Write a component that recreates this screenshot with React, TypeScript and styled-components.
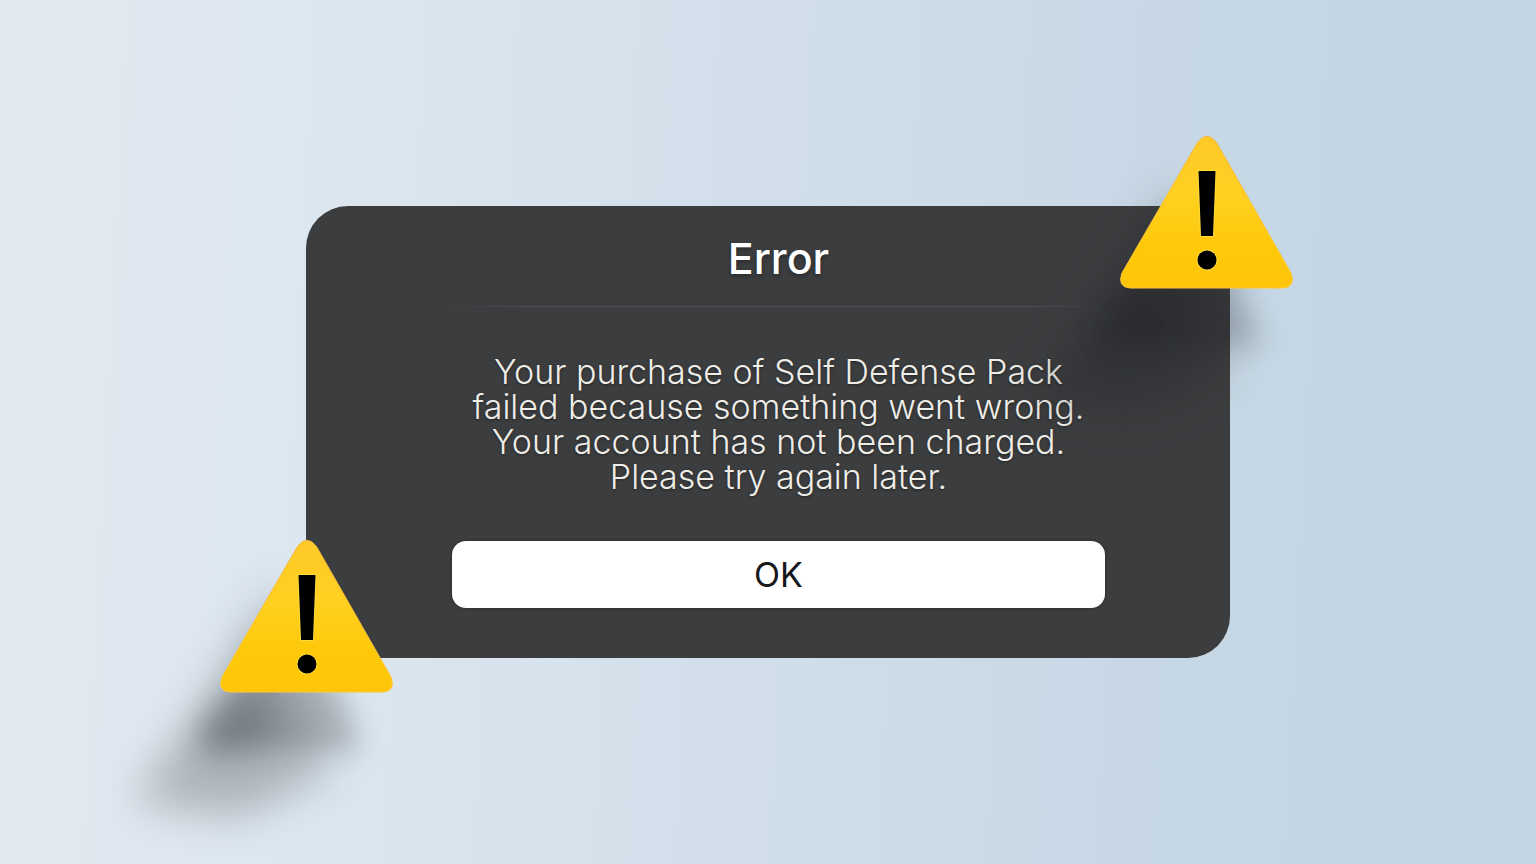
import React, { useId } from "react";
import styled, { createGlobalStyle, css } from "styled-components";

const GlobalStyle = createGlobalStyle`
  *, *::before, *::after {
    box-sizing: border-box;
  }
  body {
    margin: 0;
    font-family: Inter, "Liberation Sans", sans-serif;
  }
`;

const Page = styled.main`
  min-height: 100vh;
  display: flex;
  align-items: center;
  justify-content: center;
  padding: 40px 96px;
  overflow: hidden;
  background: linear-gradient(
    93deg,
    #e2e9f1 0%,
    #dde7ef 20%,
    #d2dfea 48%,
    #c8d8e6 72%,
    #c1d5e2 100%
  );
`;

const Dialog = styled.section`
  position: relative;
  width: 100%;
  max-width: 924px;
  padding: 0 125px 50px 146px;
  border-radius: 42px;
  background: #3c3d3f;
  text-align: center;
`;

const Header = styled.header`
  display: flex;
  align-items: center;
  justify-content: center;
  height: 100px;
  padding-top: 4px;
`;

const Title = styled.h1`
  margin: 0;
  color: #ffffff;
  font-size: 43px;
  font-weight: 500;
  line-height: 48px;
  text-shadow: 0 2px 4px rgba(0, 0, 0, 0.35);
`;

const Divider = styled.hr`
  height: 1px;
  margin: 0;
  border: 0;
  background: linear-gradient(90deg, transparent, #4e4f53 12%, #4e4f53 88%, transparent);
`;

const Message = styled.p`
  margin: 0;
  padding: 47px 0;
  color: #efede8;
  font-size: 34px;
  font-weight: 300;
  line-height: 35px;
  white-space: pre-line;
  text-shadow: 0 1px 3px rgba(0, 0, 0, 0.45);
`;

const OkButton = styled.button`
  display: block;
  width: 100%;
  height: 67px;
  padding: 0;
  border: 0;
  border-radius: 14px;
  background: #ffffff;
  box-shadow: 0 0 3px rgba(20, 20, 22, 0.6);
  color: #17181a;
  font-family: inherit;
  font-size: 34px;
  font-weight: 400;
  line-height: 40px;
  cursor: pointer;
`;

type Corner = "topRight" | "bottomLeft";

const corners = {
  topRight: css`
    top: -70px;
    right: -63px;
  `,
  bottomLeft: css`
    bottom: -34px;
    left: -86px;
  `,
};

const Sign = styled.svg<{ $corner: Corner }>`
  position: absolute;
  width: 173px;
  height: 152px;
  overflow: visible;
  pointer-events: none;
  ${({ $corner }) => corners[$corner]}
`;

function WarningSign({ corner }: { corner: Corner }) {
  const id = useId();
  const face = `${id}face`;
  const near = `${id}near`;
  const far = `${id}far`;
  const edge = `${id}edge`;
  const outline =
    "M77.500 6.500Q87 -6 96.500 6.500L171 137Q176 151 163 152H10Q-3 151 2 137Z";

  return (
    <Sign $corner={corner} viewBox="0 0 173 152" aria-hidden="true">
      <defs>
        <linearGradient id={face} x1="0" y1="0" x2="0" y2="1">
          <stop offset="0" stopColor="#ffc928" />
          <stop offset="0.4" stopColor="#ffd021" />
          <stop offset="0.72" stopColor="#ffc90a" />
          <stop offset="1" stopColor="#ffc508" />
        </linearGradient>
        <linearGradient id={edge} x1="0" y1="0" x2="0" y2="1">
          <stop offset="0" stopColor="#f1b83a" />
          <stop offset="1" stopColor="#ffc933" />
        </linearGradient>
        <filter id={near} x="-60%" y="-60%" width="220%" height="220%" colorInterpolationFilters="sRGB">
          <feGaussianBlur stdDeviation="14" />
        </filter>
        <filter id={far} x="-60%" y="-60%" width="220%" height="220%" colorInterpolationFilters="sRGB">
          <feGaussianBlur stdDeviation="22" />
        </filter>
      </defs>
      <path
        d="M60 40L-20 170L-88 262L20 276L112 230L60 140Z"
        fill="#1b1d21"
        opacity="0.26"
        filter={`url(#${far})`}
      />
      <path
        d="M64 64L-26 212L60 206L142 212L124 160Z"
        fill="#1b1d21"
        opacity="0.25"
        filter={`url(#${near})`}
      />
      <ellipse cx="12" cy="188" rx="36" ry="28" fill="#1b1d21" opacity="0.13" filter={`url(#${near})`} />
      <path d={outline} fill={`url(#${face})`} stroke={`url(#${edge})`} strokeWidth="1" />
      <path d="M78.500 35H95.500L93 100H81Z" fill="#000000" stroke="#ffdc3c" strokeWidth="2" paintOrder="stroke" />
      <circle cx="87" cy="124" r="9.500" fill="#000000" stroke="#ffdc3c" strokeWidth="2" paintOrder="stroke" />
    </Sign>
  );
}

const message = `Your purchase of Self Defense Pack
failed because something went wrong.
Your account has not been charged.
Please try again later.`;

export default function App() {
  return (
    <>
      <GlobalStyle />
      <Page>
        <Dialog role="alertdialog" aria-labelledby="error-title" aria-describedby="error-message">
          <Header>
            <Title id="error-title">Error</Title>
          </Header>
          <Divider />
          <Message id="error-message">{message}</Message>
          <OkButton type="button">OK</OkButton>
          <WarningSign corner="topRight" />
          <WarningSign corner="bottomLeft" />
        </Dialog>
      </Page>
    </>
  );
}
